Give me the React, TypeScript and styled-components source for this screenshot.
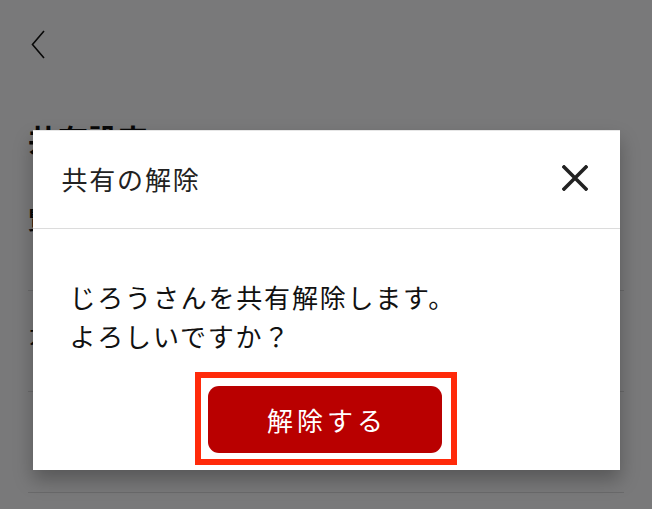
import React from 'react';
import styled, {createGlobalStyle} from 'styled-components';

const GlobalStyle = createGlobalStyle`
  html, body {
    margin: 0;
    padding: 0;
    background: #fcfcfe;
    font-family: "Noto Sans CJK JP", "Noto Sans", sans-serif;
    color: #111;
  }
`;

const Page = styled.div`
  width: 652px;
  height: 509px;
  overflow: hidden;
  position: relative;
`;

const TopBar = styled.div`
  height: 88px;
  box-sizing: border-box;
  display: flex;
  align-items: flex-start;
  padding: 30px 0 0 31px;
`;

const BackButton = styled.button`
  border: none;
  background: none;
  padding: 0;
  display: flex;
`;

const PageTitle = styled.h1`
  margin: 30px 0 0 28px;
  font-size: 30px;
  font-weight: 700;
  line-height: 40px;
`;

const SectionLabel = styled.div`
  margin: 44px 0 0 28px;
  font-size: 24px;
  font-weight: 700;
  line-height: 34px;
`;

const List = styled.ul`
  list-style: none;
  margin: 54px 28px 0 28px;
  padding: 0;
  border-top: 1px solid #dedee0;
`;

const ListItem = styled.li<{indent?: boolean}>`
  height: 101px;
  box-sizing: border-box;
  display: flex;
  align-items: center;
  padding: 0 0 16px ${p => (p.indent ? '16px' : '0')};
  font-size: 24px;
  border-bottom: 1px solid #dedee0;
`;

const Overlay = styled.div`
  position: absolute;
  inset: 0;
  background: rgba(0, 0, 0, 0.52);
  display: flex;
  justify-content: center;
  align-items: flex-start;
  padding-top: 130px;
`;

const Dialog = styled.div`
  width: 587px;
  background: #fff;
  border-top: 1px solid #e6e6e6;
  box-shadow: 0 10px 18px rgba(0, 0, 0, 0.28);
`;

const DialogHeader = styled.div`
  height: 97px;
  display: flex;
  align-items: center;
  justify-content: space-between;
  padding: 0 30px 0 29px;
  border-bottom: 1px solid #dcdcdc;
`;

const DialogTitle = styled.h2`
  margin: 0 0 2px 0;
  font-size: 26px;
  font-weight: 400;
  color: #222;
  letter-spacing: 1.8px;
`;

const CloseButton = styled.button`
  border: none;
  background: none;
  padding: 0;
  width: 30px;
  height: 30px;
  display: flex;
  align-items: center;
  justify-content: center;
  margin-bottom: 4px;
`;

const DialogBody = styled.div`
  padding: 48px 0 5px 37px;
`;

const Message = styled.p`
  margin: 0;
  font-size: 26px;
  line-height: 39px;
  letter-spacing: 1.8px;
  color: #111;
`;

const Actions = styled.div`
  display: flex;
  justify-content: center;
  padding-right: 37px;
  margin-top: 17px;
`;

const Highlight = styled.div`
  border: 6px solid #ff2a0a;
  padding: 8px 9px 6px 7px;
`;

const DangerButton = styled.button`
  display: block;
  width: 234px;
  height: 67px;
  border: none;
  border-radius: 11px;
  background: #b90000;
  color: #fff;
  font-family: "Noto Sans CJK JP", "Noto Sans", sans-serif;
  font-size: 26px;
  letter-spacing: 4px;
  padding: 0 0 0 4px;
`;

export default function App() {
  return (
    <Page>
      <GlobalStyle />
      <TopBar>
        <BackButton aria-label="戻る">
          <svg width="14" height="29" viewBox="0 0 14 29">
            <path d="M13 1 L1.5 14.5 L13 28" fill="none" stroke="#111" strokeWidth="1.6" />
          </svg>
        </BackButton>
      </TopBar>
      <PageTitle>共有設定</PageTitle>
      <SectionLabel>覧できるユーザー</SectionLabel>
      <List>
        <ListItem>ガ じろうさん</ListItem>
        <ListItem indent>はなこさん</ListItem>
      </List>
      <Overlay>
        <Dialog role="dialog">
          <DialogHeader>
            <DialogTitle>共有の解除</DialogTitle>
            <CloseButton aria-label="閉じる">
              <svg width="26" height="26" viewBox="0 0 26 26">
                <path d="M2 2 L24 24 M24 2 L2 24" stroke="#222" strokeWidth="3.6" strokeLinecap="square" />
              </svg>
            </CloseButton>
          </DialogHeader>
          <DialogBody>
            <Message>
              じろうさんを共有解除します。
              <br />
              よろしいですか？
            </Message>
            <Actions>
              <Highlight>
                <DangerButton>解除する</DangerButton>
              </Highlight>
            </Actions>
          </DialogBody>
        </Dialog>
      </Overlay>
    </Page>
  );
}
